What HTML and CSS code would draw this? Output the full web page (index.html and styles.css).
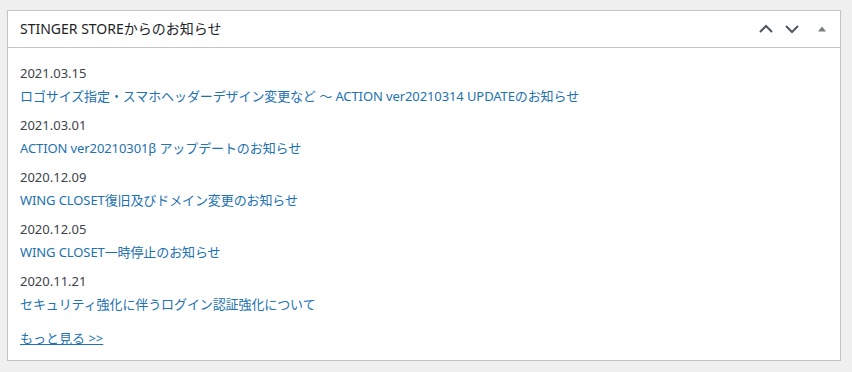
FILE: index.html
```html
<!DOCTYPE html>
<html lang="ja">
<head>
    <meta charset="UTF-8">
    <meta name="viewport" content="width=device-width, initial-scale=1.0">
    <title>ダッシュボード</title>
    <link rel="stylesheet" href="styles.css">
</head>
<body>
    <div class="postbox">
        <div class="postbox-header">
            <h2 class="hndle">STINGER STOREからのお知らせ</h2>
            <div class="handle-actions">
                <button class="handle-btn" aria-label="上へ移動">
                    <svg width="14" height="14" viewBox="0 0 14 14"><path d="M1 10 L7 4 L13 10" fill="none" stroke="#50575e" stroke-width="2"/></svg>
                </button>
                <button class="handle-btn" aria-label="下へ移動">
                    <svg width="14" height="14" viewBox="0 0 14 14"><path d="M1 4 L7 10 L13 4" fill="none" stroke="#50575e" stroke-width="2"/></svg>
                </button>
                <button class="handle-btn toggle" aria-label="パネルを切り替え">
                    <svg width="10" height="10" viewBox="0 0 10 10"><path d="M1 7.5 L5 2.5 L9 7.5 Z" fill="#787c82"/></svg>
                </button>
            </div>
        </div>
        <div class="inside">
            <ul class="news">
                <li>
                    <div class="date">2021.03.15</div>
                    <a href="#">ロゴサイズ指定・スマホヘッダーデザイン変更など ～ ACTION ver20210314 UPDATEのお知らせ</a>
                </li>
                <li>
                    <div class="date">2021.03.01</div>
                    <a href="#">ACTION ver20210301β アップデートのお知らせ</a>
                </li>
                <li>
                    <div class="date">2020.12.09</div>
                    <a href="#">WING CLOSET復旧及びドメイン変更のお知らせ</a>
                </li>
                <li>
                    <div class="date">2020.12.05</div>
                    <a href="#">WING CLOSET一時停止のお知らせ</a>
                </li>
                <li>
                    <div class="date">2020.11.21</div>
                    <a href="#">セキュリティ強化に伴うログイン認証強化について</a>
                </li>
            </ul>
            <a class="more" href="#">もっと見る &gt;&gt;</a>
        </div>
    </div>
</body>
</html>
```

FILE: styles.css
```css
body { margin: 0; padding: 10px 0 0 7px; background: #f0f0f1; font-family: "Segoe UI", "Noto Sans", "Noto Sans CJK JP", sans-serif; font-size: 13px; color: #3c434a; }
.postbox { width: 832px; background: #fff; border: 1px solid #c3c4c7; box-shadow: 0 1px 1px rgba(0,0,0,.04); }
.postbox-header { display: flex; align-items: center; justify-content: space-between; height: 36px; border-bottom: 1px solid #c3c4c7; }
.hndle { margin: 0; padding-left: 12px; font-size: 14px; font-weight: 400; color: #1d2327; line-height: 1.4; }
.handle-actions { display: flex; align-items: center; padding-right: 8px; }
.handle-btn { display: flex; align-items: center; justify-content: center; width: 26px; height: 36px; padding: 0; border: 0; background: none; }
.handle-btn.toggle { width: 21px; margin-left: 6px; }

.inside { padding: 15px 12px 12px; }
.news { list-style: none; margin: 0; padding: 0; }
.news li { margin-bottom: 9px; }
.date { line-height: 20px; }
.news a { display: block; margin-top: 3px; line-height: 20px; color: #2271b1; text-decoration: none; letter-spacing: -0.1px; }
.more { display: inline-block; margin-top: 5px; line-height: 20px; color: #2271b1; text-decoration: underline; }
```
